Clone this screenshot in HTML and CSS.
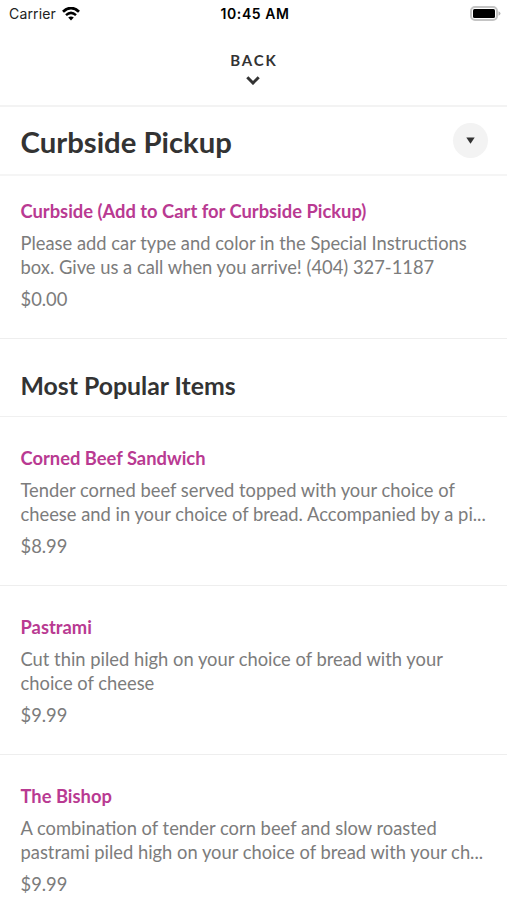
FILE: index.html
```html
<!DOCTYPE html>
<html lang="en">

<head>
    <meta charset="UTF-8">
    <meta name="viewport" content="width=device-width, initial-scale=1">
    <title>Curbside Pickup</title>
    <link rel="stylesheet" href="styles.css">
</head>

<body>

    <div class="status-bar">
        <div class="carrier">
            <span>Carrier</span>
            <svg width="18" height="14" viewBox="0 0 18 14">
                <path d="M1 4.8 Q9 -2.6 17 4.8" fill="none" stroke="#000" stroke-width="2.8" />
                <path d="M4 8.1 Q9 3.7 14 8.1" fill="none" stroke="#000" stroke-width="2.5" />
                <path d="M6.2 10.6 Q9 8.2 11.8 10.6 L9 13.5 Z" />
            </svg>
        </div>
        <div class="time">10:45 AM</div>
        <svg class="battery" width="31" height="15" viewBox="0 0 31 15">
            <rect x="1" y="1" width="26" height="13" rx="4" fill="none" stroke="#c4c4c4" stroke-width="2" />
            <rect x="3" y="3" width="22" height="9" rx="1.5" />
            <path d="M28.5 5.3 Q30.5 6 30.5 7.5 T28.5 9.7 Z" fill="#b5b5b5" />
        </svg>
    </div>

    <button class="back">
        <span>BACK</span>
        <svg width="14" height="9" viewBox="0 0 14 9">
            <path d="M1.3 1.3 L7 7 L12.7 1.3" fill="none" stroke="#333" stroke-width="3" />
        </svg>
    </button>

    <div class="menu-header">
        <h1>Curbside Pickup</h1>
        <button class="dropdown">
            <svg width="9" height="7" viewBox="0 0 9 7">
                <path d="M0.3 0.5 H8.7 L4.5 6.8 Z" fill="#333" />
            </svg>
        </button>
    </div>

    <div class="item first">
        <h3>Curbside (Add to Cart for Curbside Pickup)</h3>
        <p>Please add car type and color in the Special Instructions<br>box. Give us a call when you arrive! (404) 327-1187</p>
        <div class="price">$0.00</div>
    </div>

    <h2>Most Popular Items</h2>

    <div class="item">
        <h3>Corned Beef Sandwich</h3>
        <p>Tender corned beef served topped with your choice of<br>cheese and in your choice of bread. Accompanied by a pi...</p>
        <div class="price">$8.99</div>
    </div>

    <div class="item">
        <h3>Pastrami</h3>
        <p>Cut thin piled high on your choice of bread with your<br>choice of cheese</p>
        <div class="price">$9.99</div>
    </div>

    <div class="item">
        <h3>The Bishop</h3>
        <p>A combination of tender corn beef and slow roasted<br>pastrami piled high on your choice of bread with your ch...</p>
        <div class="price">$9.99</div>
    </div>

</body>

</html>
```

FILE: styles.css
```css
* {
    box-sizing: border-box;
}

body {
    font-family: Lato, sans-serif;
    background: #fff;
    color: #333;
    margin: 0;
    height: 900px;
    overflow: hidden;
}

h1,
h2,
h3,
p {
    margin: 0;
}

button {
    font-family: inherit;
    color: inherit;
    border: none;
    padding: 0;
    cursor: pointer;
}

.status-bar {
    display: grid;
    grid-template-columns: 1fr auto 1fr;
    align-items: center;
    height: 27px;
    padding: 0 6px 0 9px;
    font-family: Inter, sans-serif;
    font-size: 14px;
    color: #000;
}

.carrier {
    display: flex;
    align-items: center;
    gap: 6px;
    color: #222;
    letter-spacing: 0.15px;
}

.time {
    font-weight: 600;
    letter-spacing: 0.55px;
}

.battery {
    justify-self: end;
}

.back {
    display: flex;
    flex-direction: column;
    align-items: center;
    gap: 7px;
    width: 100%;
    height: 80px;
    padding: 24px 1px 0 0;
    background: #fff;
    border-bottom: 2px solid #f3f3f3;
    font-size: 15px;
    font-weight: 700;
    line-height: 18px;
    letter-spacing: 1.9px;
}

.back span {
    margin-right: -1.9px;
}

.menu-header {
    display: flex;
    align-items: center;
    justify-content: space-between;
    height: 69px;
    padding: 0 19px 0 20.5px;
    border-bottom: 2px solid #f5f5f5;
}

h1 {
    padding-top: 2px;
    font-size: 29.3px;
    line-height: 36px;
}

.dropdown {
    display: flex;
    align-items: center;
    justify-content: center;
    width: 35px;
    height: 35px;
    border-radius: 50%;
    background: #f3f3f3;
}

.item {
    height: 169px;
    padding: 29px 10px 0 20.5px;
    border-bottom: 1px solid #eee;
    font-size: 18.35px;
    color: #7c7c7c;
}

.first {
    height: 163px;
    padding-top: 23px;
}

h2 {
    height: 78px;
    padding: 31px 20.5px 0;
    border-bottom: 1px solid #f0f0f0;
    font-size: 24.8px;
    line-height: 32px;
}

h3 {
    font-size: 18.35px;
    line-height: 24px;
    color: #b93a92;
}

.item p {
    margin-top: 8px;
    line-height: 24.4px;
    white-space: nowrap;
}

.price {
    margin-top: 7px;
    line-height: 24px;
}
```
